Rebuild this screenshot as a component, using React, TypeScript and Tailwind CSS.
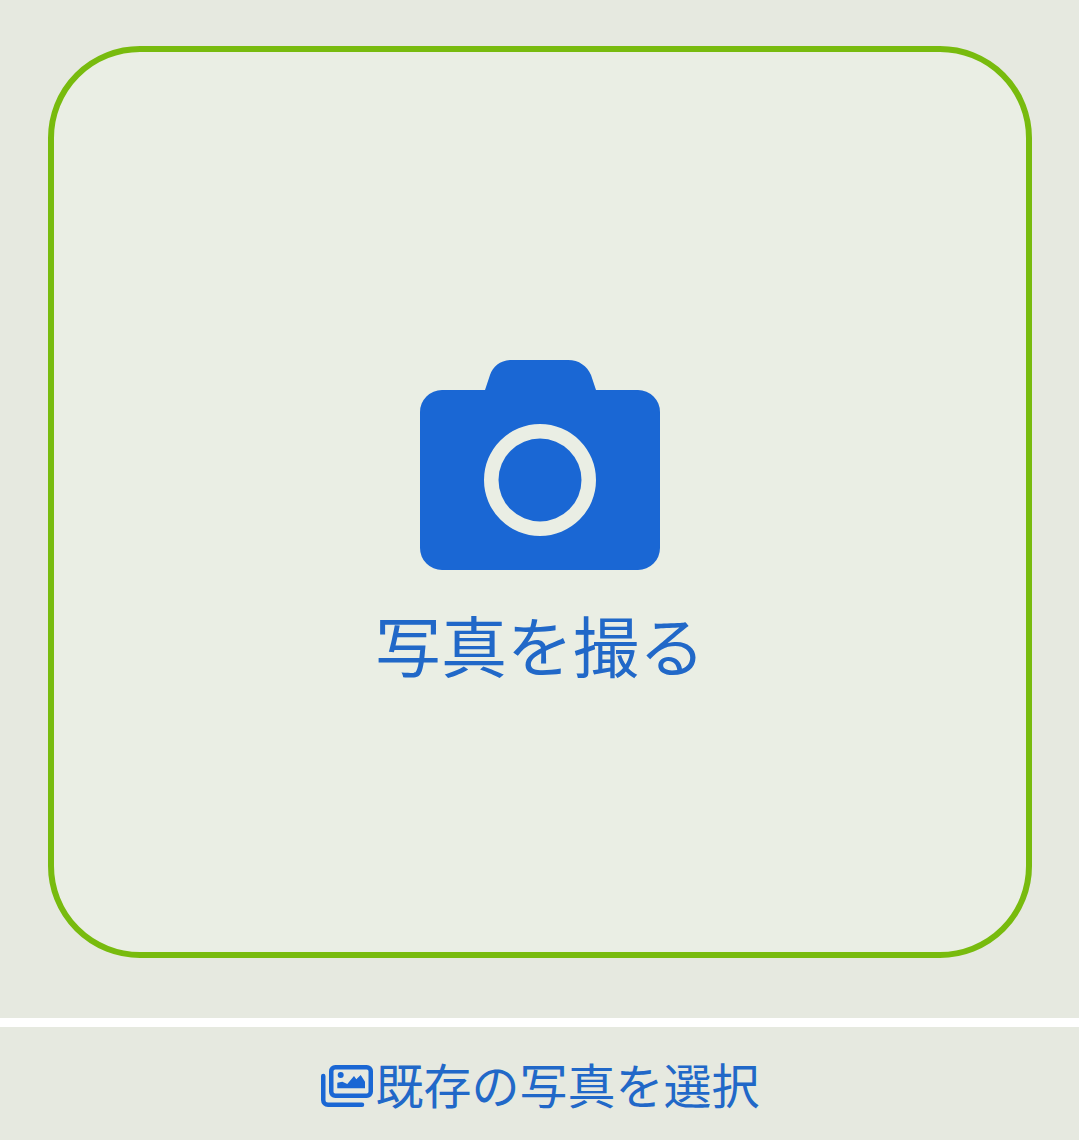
export default function App() {
  const font = { fontFamily: '"Noto Sans CJK JP", "Noto Sans", sans-serif' };
  return (
    <div className="w-[1079px] h-[1140px] flex flex-col bg-white overflow-hidden" style={font}>
      <div className="h-[1018px] bg-[#e6e9e0] pt-[46px] pl-[48px]">
        <div className="w-[984px] h-[912px] rounded-[92px] border-[6px] border-[#78bb0e] bg-[#eaeee4] flex flex-col items-center pt-[308px]">
          <svg width="240" height="210" viewBox="0 0 240 210" className="block">
            <path
              fill="#1a67d4"
              fillRule="evenodd"
              d="M65 30 L70 15 C73 6 81 0 92 0 L148 0 C159 0 167 6 171 15 L176 30 L218 30 A22 22 0 0 1 240 52 L240 188 A22 22 0 0 1 218 210 L22 210 A22 22 0 0 1 0 188 L0 52 A22 22 0 0 1 22 30 Z M120 64 A56 56 0 0 1 120 176 A56 56 0 0 1 120 64 Z"
            />
            <circle cx="120" cy="120" r="41.5" fill="#1a67d4" />
          </svg>
          <div className="mt-[25px] text-[66px] leading-[96px] text-[#2168c8] whitespace-nowrap font-normal">写真を撮る</div>
        </div>
      </div>
      <div className="h-[9px] bg-white" />
      <div className="h-[113px] bg-[#e6e9e0] flex items-center justify-center text-[48px] leading-[72px] text-[#2168c8] pb-[2px]">
        <svg width="56" height="46" viewBox="0 0 56 46" className="block shrink-0 mt-[6px]">
          <rect x="12.25" y="4.25" width="39.5" height="28.5" rx="4" fill="none" stroke="#1a67d4" strokeWidth="4.5" />
          <path d="M4.25 13 L4.25 37 A4.75 4.75 0 0 0 9 41.75 L43 41.75" fill="none" stroke="#1a67d4" strokeWidth="4.5" strokeLinecap="round" />
          <circle cx="21.7" cy="12" r="3" fill="#1a67d4" />
          <path d="M18.3 25.3 L18.3 19.7 L23.3 18.7 L28.3 21 L35 13 L37.3 16.3 L41.7 12 L46 18.7 L46 25.3 Z" fill="#1a67d4" />
        </svg>
        <span className="whitespace-nowrap">既存の写真を選択</span>
      </div>
    </div>
  );
}
